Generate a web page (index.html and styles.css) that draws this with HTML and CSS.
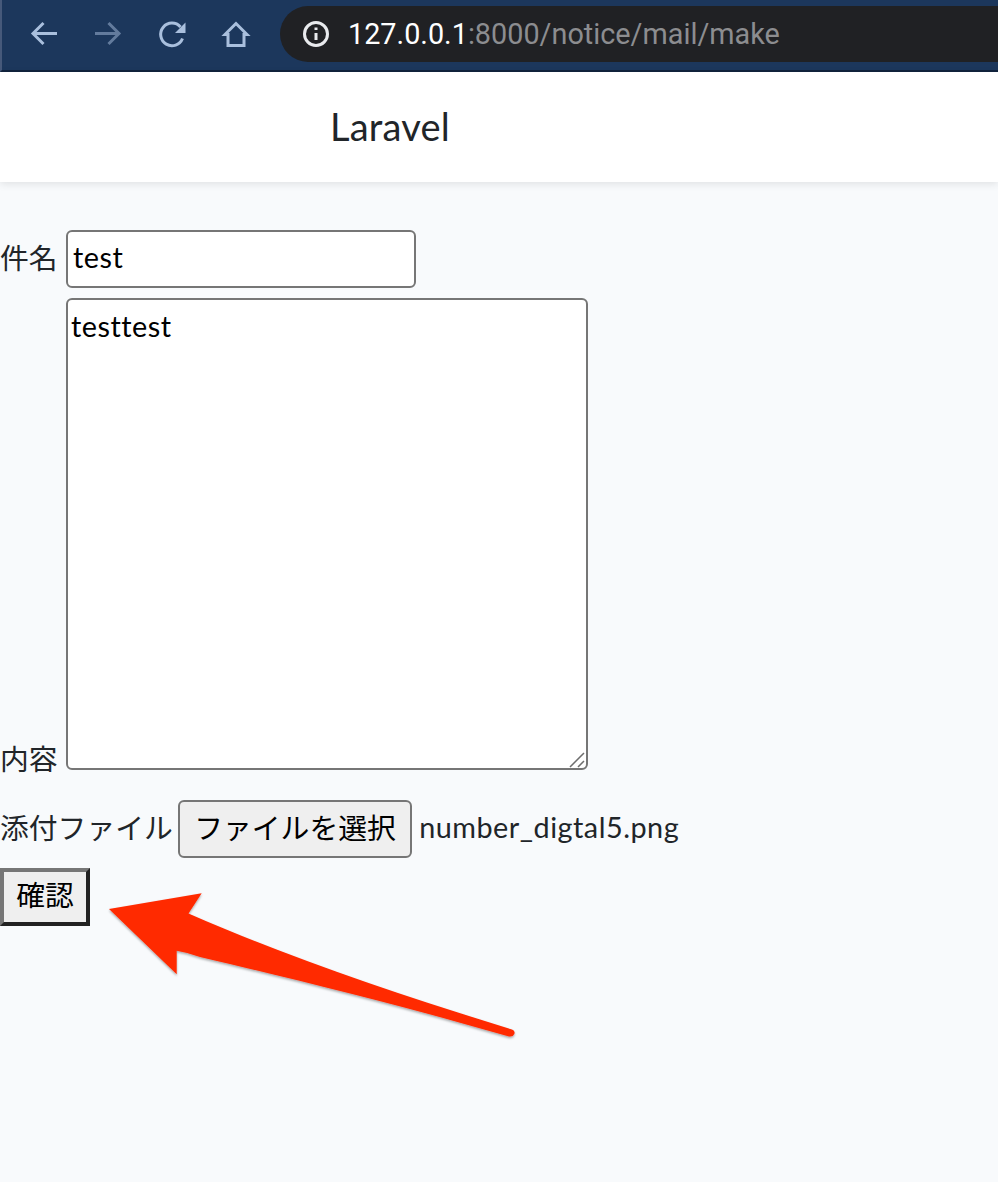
FILE: index.html
```html
<!DOCTYPE html>
<html lang="ja">
<head>
<meta charset="utf-8">
<title>Laravel</title>
<link rel="stylesheet" href="styles.css">
</head>
<body>
<div class="toolbar">
  <div class="nav">
    <svg class="icon" viewBox="0 0 32 32"><path class="stroke" d="M29 15.500H5M15.500 5 5 15.500 15.500 26"/></svg>
    <svg class="icon dim" viewBox="0 0 32 32"><path class="stroke" d="M3 15.500H27M16.500 5 27 15.500 16.500 26"/></svg>
    <svg class="icon" viewBox="0 0 32 32"><path class="stroke" d="M26.500 20.500A11.300 11.300 0 1 1 24.500 9"/><path class="fill" d="M29.500 4.500V15H19Z"/></svg>
    <svg class="icon" viewBox="0 0 32 32"><path class="stroke" d="M16 5.500 5 16.500H8V27.500H24V16.500H27Z"/></svg>
  </div>
  <div class="url">
    <svg class="info" viewBox="0 0 28 28"><circle cx="14" cy="14" r="11.500"/><path d="M14 13v7"/><path d="M14 7.500v2.500"/></svg>
    <span class="host">127.0.0.1</span><span class="path">:8000/notice/mail/make</span>
  </div>
</div>
<header class="navbar"><a class="brand">Laravel</a></header>
<main>
  <form class="mail-form">
    <div class="row subject-row">
      <label class="lbl">件名</label>
      <input class="field" type="text" value="test">
    </div>
    <div class="row body-row">
      <label class="lbl">内容</label>
      <div class="area-wrap">
        <textarea class="area">testtest</textarea>
        <svg class="grip" viewBox="0 0 16 16"><path d="M1 15 15 1M9 15 15 9"/></svg>
      </div>
    </div>
    <div class="row file-row">
      <label class="lbl">添付ファイル</label>
      <button class="file-btn" type="button"><span class="btn-text">ファイルを選択</span></button>
      <span class="file-name">number_digtal5.png</span>
    </div>
    <button class="submit" type="button"><span class="btn-text">確認</span></button>
  </form>
</main>
<svg class="arrow" viewBox="0 0 998 1182" aria-hidden="true">
  <defs><filter id="sh" x="-5%" y="-5%" width="110%" height="115%"><feDropShadow dx="0" dy="1.500" stdDeviation="1.200" flood-color="#000" flood-opacity=".35"/></filter></defs>
  <path filter="url(#sh)" d="M109 909 201.700 893.300 188.500 913.500C290 958 400 995 512 1029.500Q515.500 1031 514.300 1034Q513 1037 509 1036.500C400 1005 290 978 200 957Q188 952.500 176.700 950.700V974.300Z" fill="#ff2a00"/>
</svg>
</body>
</html>
```
FILE: styles.css
```css
* { box-sizing: border-box; }
html, body { margin: 0; height: 100%; }
body {
  background: #f8fafc;
  color: #212529;
  font-family: "Lato", "Noto Sans CJK JP", sans-serif;
  font-size: 28.800px;
  overflow: hidden;
  position: relative;
}
.toolbar {
  height: 72px;
  background: #1c375c;
  border-left: 2px solid #46597a;
  border-bottom: 2px solid #11233d;
  display: flex;
  align-items: flex-start;
  padding-top: 6px;
}
.nav {
  display: flex;
  gap: 32px;
  padding: 12px 0 0 26px;
  width: 278px;
}
.icon { width: 32px; height: 32px; display: block; }
.icon.dim { opacity: .5; }
.stroke { fill: none; stroke: #a9bfdd; stroke-width: 3; }
.fill { fill: #a9bfdd; }
.url {
  flex: 1;
  height: 56px;
  background: #202124;
  border-radius: 28px 0 0 28px;
  display: flex;
  align-items: center;
  padding-left: 22px;
  font-family: "Roboto", sans-serif;
  font-size: 28.800px;
  white-space: nowrap;
}
.info { width: 28px; height: 28px; margin-right: 18px; fill: none; stroke: #e8eaed; stroke-width: 3; }
.host { color: #fff; }
.path { color: #8c8d90; }
.navbar {
  height: 110px;
  background: #fff;
  box-shadow: 0 2px 8px rgba(0, 0, 0, .1);
  padding: 0 0 3px 330px;
  display: flex;
  align-items: center;
}
.brand { font-size: 38px; letter-spacing: .2px; color: #212529; }
.mail-form { padding-top: 48px; display: flex; flex-direction: column; align-items: flex-start; }
.row { display: flex; align-items: center; margin-bottom: 10px; }
.subject-row { gap: 8.400px; }
.subject-row .lbl, .file-row .lbl { padding-bottom: 6px; }
.body-row { gap: 8.400px; align-items: flex-end; }
.body-row .lbl { line-height: 22px; }
.field {
  width: 350px;
  height: 58px;
  border: 2px solid #767676;
  border-radius: 6px;
  background: #fff;
  color: #000;
  font: 28.800px "Lato", sans-serif;
  letter-spacing: .5px;
  padding: 0 5px 4px;
  margin: 0;
}
.area-wrap { position: relative; }
.area {
  width: 522px;
  height: 472px;
  border: 2px solid #767676;
  border-radius: 6px;
  background: #fff;
  color: #000;
  font: 28.800px/36px "Lato", sans-serif;
  letter-spacing: .5px;
  padding: 8px 3px;
  margin: 0;
  display: block;
  resize: none;
}
.grip {
  position: absolute;
  right: 3px;
  bottom: 2px;
  width: 16px;
  height: 16px;
  fill: none;
  stroke: #6e6e6e;
  stroke-width: 1.500;
}
.file-row { margin-top: 20px; gap: 5.200px; }
.file-btn {
  width: 234px;
  height: 58px;
  border: 2px solid #767676;
  border-radius: 6px;
  background: #efefef;
  color: #000;
  font: 28.800px "Noto Sans CJK JP", sans-serif;
  padding: 0;
  margin: 0;
}
.btn-text { display: block; position: relative; top: -3px; }
.submit .btn-text { top: -4px; }
.file-name { margin-left: 2px; padding-bottom: 5px; letter-spacing: .5px; }
.submit {
  width: 90px;
  height: 58px;
  border-width: 4px;
  border-style: solid;
  border-color: #767676 #222 #222 #767676;
  background: #efefef;
  color: #000;
  font: 28.800px "Noto Sans CJK JP", sans-serif;
  padding: 0;
}
.arrow { position: absolute; left: 0; top: 0; width: 998px; height: 1182px; pointer-events: none; }
```
